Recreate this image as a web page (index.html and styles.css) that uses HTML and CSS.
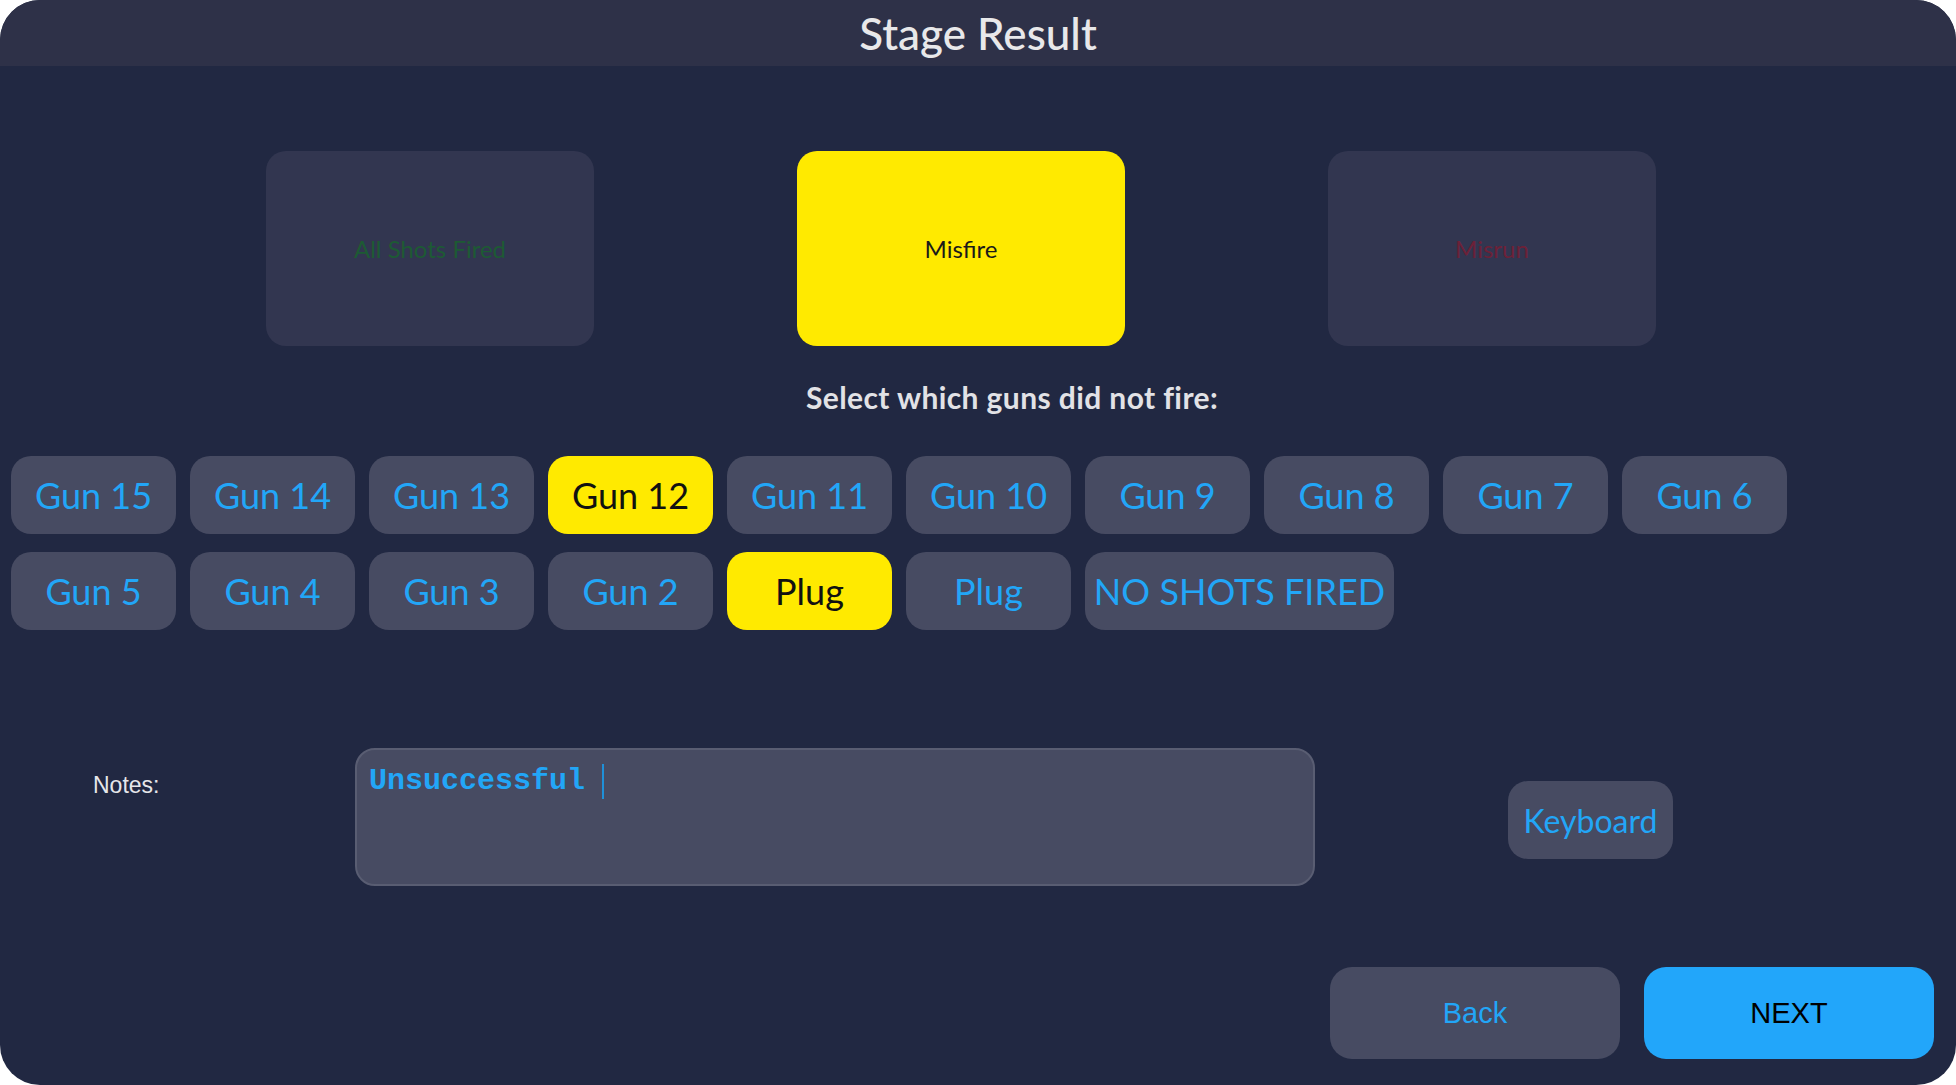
FILE: index.html
```html
<!DOCTYPE html>
<html>
<head>
<meta charset="utf-8">
<title>Stage Result</title>
<link rel="stylesheet" href="styles.css">
</head>
<body>
<div class="window">
  <header class="title-bar">Stage Result</header>

  <section class="result-cards">
    <div class="card card-ok">All Shots Fired</div>
    <div class="card card-active">Misfire</div>
    <div class="card card-bad">Misrun</div>
  </section>

  <p class="prompt">Select which guns did not fire:</p>

  <section class="guns">
    <button class="gun">Gun 15</button>
    <button class="gun">Gun 14</button>
    <button class="gun">Gun 13</button>
    <button class="gun selected">Gun 12</button>
    <button class="gun">Gun 11</button>
    <button class="gun">Gun 10</button>
    <button class="gun">Gun 9</button>
    <button class="gun">Gun 8</button>
    <button class="gun">Gun 7</button>
    <button class="gun">Gun 6</button>
    <button class="gun">Gun 5</button>
    <button class="gun">Gun 4</button>
    <button class="gun">Gun 3</button>
    <button class="gun">Gun 2</button>
    <button class="gun selected">Plug</button>
    <button class="gun">Plug</button>
    <button class="gun wide">NO SHOTS FIRED</button>
  </section>

  <section class="notes-row">
    <label class="notes-label">Notes:</label>
    <div class="notes-box"><span class="notes-text">Unsuccessful</span><span class="caret"></span></div>
    <button class="keyboard">Keyboard</button>
  </section>

  <footer class="actions">
    <button class="action back">Back</button>
    <button class="action next">NEXT</button>
  </footer>
</div>
</body>
</html>
```

FILE: styles.css
```css
* { box-sizing: border-box; }

html, body {
  margin: 0;
  padding: 0;
  background: #ffffff;
}

.window {
  width: 1956px;
  height: 1085px;
  border-radius: 40px;
  overflow: hidden;
  background: #212842;
  font-family: "Lato", "Noto Sans", sans-serif;
  display: flex;
  flex-direction: column;
}

.title-bar {
  height: 66px;
  flex: none;
  background: #2e3148;
  color: #e8e8ea;
  font-size: 44px;
  font-weight: 500;
  display: flex;
  align-items: center;
  justify-content: center;
  padding-top: 0;
}

.result-cards {
  margin-top: 85px;
  display: flex;
  gap: 203px;
  padding-left: 266px;
}

.card {
  width: 328px;
  height: 195px;
  border-radius: 20px;
  background: #323650;
  display: flex;
  align-items: center;
  justify-content: center;
  font-size: 24px;
}

.card-ok { color: #1d5a34; }
.card-bad { color: #6c2138; }
.card-active { background: #ffea00; color: #1a1a1a; }

.prompt {
  margin: 33px 0 0;
  padding-left: 68px;
  text-align: center;
  color: #e2e2e6;
  font-size: 30px;
  font-weight: 700;
  letter-spacing: 0.4px;
  line-height: 36px;
}

.guns {
  margin-top: 41px;
  padding-left: 11px;
  width: 1800px;
  display: flex;
  flex-wrap: wrap;
  column-gap: 14px;
  row-gap: 18px;
}

.gun {
  width: 165px;
  height: 78px;
  border: none;
  border-radius: 20px;
  background: #474b62;
  color: #22a6f7;
  font-family: "Lato", "Noto Sans", sans-serif;
  font-size: 36px;
  padding: 0;
}

.gun.selected {
  background: #ffea00;
  color: #111111;
}

.gun.wide {
  width: 309px;
}

.notes-row {
  margin-top: 118px;
  display: flex;
  align-items: center;
  padding-left: 93px;
}

.notes-label {
  width: 262px;
  align-self: flex-start;
  margin-top: 23px;
  color: #e6e6ea;
  font-family: "Liberation Sans", Arial, sans-serif;
  font-size: 23px;
  line-height: 28px;
}

.notes-box {
  width: 960px;
  height: 138px;
  border-radius: 20px;
  border: 2px solid #595d72;
  background: #474b62;
  padding: 14px 12px;
  display: flex;
  align-items: flex-start;
}

.notes-text {
  font-family: "Liberation Mono", "Courier New", monospace;
  font-size: 30px;
  font-weight: 700;
  line-height: 34px;
  color: #22a6f7;
}

.caret {
  width: 2px;
  height: 35px;
  margin-left: 17px;
  background: #1f90d8;
  margin-top: 0;
}

.keyboard {
  margin-left: 193px;
  margin-top: 6px;
  width: 165px;
  height: 78px;
  border: none;
  border-radius: 20px;
  background: #474b62;
  color: #22a6f7;
  font-family: "Lato", "Noto Sans", sans-serif;
  font-size: 32px;
  padding: 0;
}

.actions {
  margin-top: 81px;
  display: flex;
  justify-content: flex-end;
  gap: 24px;
  padding-right: 22px;
}

.action {
  width: 290px;
  height: 92px;
  border: none;
  border-radius: 22px;
  font-family: "Liberation Sans", Arial, sans-serif;
  font-size: 29px;
  padding: 0;
}

.back {
  background: #474b62;
  color: #22a6f7;
}

.next {
  background: #22a6fa;
  color: #000000;
}
```
